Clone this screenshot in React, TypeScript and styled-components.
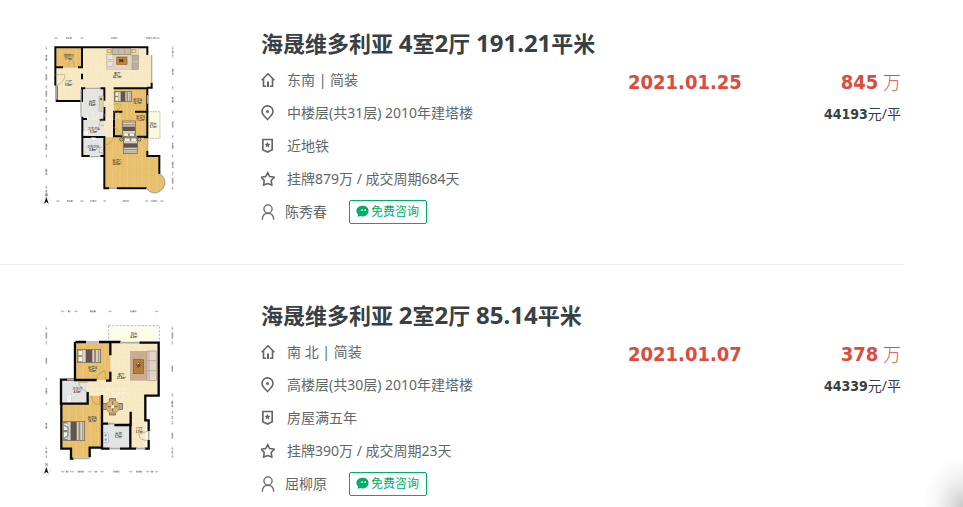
import React from "react";
import styled, { createGlobalStyle, css } from "styled-components";

const GlobalStyle = createGlobalStyle`
  *, *::before, *::after { box-sizing: border-box; }
  body {
    margin: 0;
    background: #fff;
    color: #616669;
    font-family: "Noto Sans", "Noto Sans CJK SC", sans-serif;
    font-size: 14px;
  }
`;

const Page = styled.main`
  position: relative;
  min-height: 100vh;
  padding-right: 59px;
  overflow: hidden;
`;

const CornerGlow = styled.div`
  position: absolute;
  right: 0;
  bottom: 0;
  width: 40px;
  height: 52px;
  background: radial-gradient(ellipse farthest-side at 100% 100%, #c8c8c8 0%, #e2e2e2 32%, #f5f5f5 64%, rgba(255, 255, 255, 0) 100%);
  pointer-events: none;
`;

const List = styled.ul`
  margin: 0;
  padding: 0;
  list-style: none;
`;

const Listing = styled.li`
  display: grid;
  grid-template-columns: 160px minmax(0, 1fr) 113px 160px;
  align-items: start;
  padding: 32px 3px 36px 30px;
  border-bottom: 1px solid #eee;

  &:first-child { padding-top: 25px; }
  &:last-child { padding-bottom: 0; border-bottom: 0; }
`;

const PlanLink = styled.a`
  display: block;
  height: 190px;
  svg { display: block; }
`;

const Info = styled.div`
  margin-left: 71px;
`;

const Title = styled.h2`
  margin: 0;
  height: 38px;
  font-size: 22px;
  line-height: 36px;
  font-weight: 700;
  white-space: nowrap;
`;

const TitleLink = styled.a`
  color: #394043;
  text-decoration: none;
`;

const Figure = styled.span`
  font-size: 24px;
`;

const Line = styled.div<{ $tight?: boolean }>`
  display: flex;
  align-items: center;
  gap: ${(p) => (p.$tight ? 10 : 12)}px;
  height: 33px;
  line-height: 20px;
  white-space: nowrap;
`;

const Consult = styled.button`
  display: flex;
  align-items: center;
  gap: 2px;
  height: 24px;
  margin-left: 12px;
  padding: 0 7px 0 6px;
  border: 1px solid #00ae66;
  border-radius: 2px;
  background: #fff;
  color: #00ae66;
  font-family: inherit;
  font-size: 12px;
  line-height: 20px;
  cursor: pointer;
`;

const strongFigures = css`
  font-family: "DejaVu Sans Condensed", "DejaVu Sans", sans-serif;
  font-weight: 700;
`;

const DealDate = styled.time`
  ${strongFigures}
  margin-top: 41px;
  color: #db4c3f;
  font-size: 20px;
  line-height: 32px;
  white-space: nowrap;
`;

const PriceColumn = styled.div`
  margin-top: 41px;
  text-align: right;
  white-space: nowrap;
`;

const Total = styled.div`
  color: #db4c3f;
  font-size: 18px;
  font-weight: 300;
  line-height: 32px;
  strong { ${strongFigures} font-size: 20px; }
`;

const UnitPrice = styled.div`
  color: #394043;
  font-size: 14px;
  line-height: 32px;
  strong { ${strongFigures} }
`;

const Icon = styled.svg`
  flex: none;
  width: 14px;
  height: 16px;
  fill: none;
  stroke: #616669;
  stroke-width: 1.6;
`;

const HouseIcon = () => (
  <Icon viewBox="0 0 14 16" aria-hidden="true">
    <path d="M.7 8.3 7 1.8l6.3 6.5M2.5 7v7.3h2.7M11.5 7v7.3H8.8" />
    <path d="M7 9.5V15" strokeWidth="2" />
  </Icon>
);
const PinIcon = () => (
  <Icon viewBox="0 0 14 16" aria-hidden="true">
    <path d="M6.500 14.500C4 11.800 1 9.500 1 6.400a5.500 5.500 0 0 1 11 0c0 3.100-3 5.400-5.500 8.100Z" />
    <circle cx="6.500" cy="6.400" r="1.500" fill="#616669" stroke="none" />
  </Icon>
);
const BadgeIcon = () => (
  <Icon viewBox="0 0 14 16" aria-hidden="true">
    <path d="M1.800 1.500h9.400v10.300L6.500 14 1.800 11.800Z" strokeWidth="1.700" />
    <path d="m6.500 3.800.9 1.900 2.100.2-1.600 1.400.5 2.100-1.900-1.100-1.900 1.100.5-2.100-1.600-1.400 2.100-.2Z" fill="#616669" stroke="none" />
  </Icon>
);
const StarIcon = () => (
  <Icon viewBox="0 0 14 16" aria-hidden="true">
    <path d="m6.700 1.700 2 3.900 4.500.7-3 3.200.6 4.500-4.100-1.500L2.600 14l.6-4.500-3-3.200 4.500-.7Z" />
  </Icon>
);
const PersonIcon = () => (
  <Icon viewBox="0 0 14 16" aria-hidden="true">
    <circle cx="7" cy="5" r="4.100" strokeWidth="1.300" />
    <path d="M1.300 15.700c0-4 2-6.400 5.700-6.400s5.700 2.400 5.700 6.400" strokeWidth="1.300" />
  </Icon>
);

const BubbleSvg = styled.svg`
  flex: none;
  width: 13px;
  height: 13px;
`;
const ChatIcon = () => (
  <BubbleSvg viewBox="0 0 13 13" aria-hidden="true">
    <path d="M6.700.8C3 .8.400 2.900.400 5.700c0 1.600.7 2.900 1.800 3.800L1.500 12l2.400-.9c4 1.200 8.700-.9 8.700-5.400 0-2.800-2.400-4.900-5.900-4.900Z" fill="#00ae66" />
    <circle cx="6" cy="5.200" r=".9" fill="#fff" />
    <circle cx="9.200" cy="5.200" r=".9" fill="#fff" />
  </BubbleSvg>
);

const PlanSvg = styled.svg`
  font-family: "Noto Sans", "Noto Sans CJK SC", sans-serif;
  font-size: 9px;
  text-anchor: middle;
  fill: #383838;
`;

type RulerProps = { x: number; y: number; marks: number[]; vertical?: boolean };
const Ruler = ({ x, y, marks, vertical }: RulerProps) => (
  <g transform={`translate(${x} ${y})${vertical ? " rotate(90)" : ""}`}>
    {marks.map((m) => (
      <path key={m} d={`M${m - 6} 0h12M${m} -3v6`} stroke="#888" strokeWidth="1.400" fill="none" />
    ))}
    {marks.slice(1).map((m, i) => {
      const middle = (m + marks[i]) / 2;
      const half = m - marks[i] > 40 ? 9 : 4;
      return <path key={m} d={`M${middle - half} 0h${half * 2}`} stroke="#888" strokeWidth="5" strokeDasharray="3 1" />;
    })}
  </g>
);

const Label = ({ x, y, name, area }: { x: number; y: number; name: string; area: string }) => (
  <g>
    <text x={x} y={y} fontSize="10">{name}</text>
    <text x={x} y={y + 9} fontSize="8" fontWeight="700">{area}</text>
  </g>
);

const Bed = ({ x, y, w, h, turn = 0 }: { x: number; y: number; w: number; h: number; turn?: number }) => (
  <g transform={`translate(${x} ${y}) rotate(${turn})`}>
    <rect width={w} height={h} fill="#d9d1c2" stroke="#685747" strokeWidth="2" />
    <rect width={w * 0.22} height={h} fill="#8b8173" />
    <rect x={w * 0.05} y={h * 0.1} width={w * 0.16} height={h * 0.34} fill="#f6f3e9" />
    <rect x={w * 0.05} y={h * 0.56} width={w * 0.16} height={h * 0.34} fill="#f6f3e9" />
    <rect x={w * 0.36} y="1" width={w * 0.28} height={h - 2} fill="#62554e" />
    <rect x={w * 0.72} y="1" width={w * 0.08} height={h - 2} fill="#978a7d" />
    <rect x={w * 0.88} y="1" width={w * 0.06} height={h - 2} fill="#a79b8c" />
  </g>
);

const Compass = ({ y }: { y: number }) => (
  <g>
    <circle cx="49" cy={y} r="13" fill="none" stroke="#ccc" strokeWidth="1" />
    <path d={`M49 ${y - 12}l7 20-7-5-7 5Z`} fill="#111" />
    <text x="49" y={y - 16} fontSize="11">N</text>
  </g>
);

const Patterns = ({ id }: { id: string }) => (
  <defs>
    <pattern id={`${id}-wood`} width="22" height="42" patternUnits="userSpaceOnUse">
      <rect width="22" height="42" fill="#e9c16e" />
      <path d="M0 0v42M11 0v42M0 13h11M11 31h11" stroke="#dcb05c" strokeWidth="1" />
      <path d="M6 0v42" stroke="#efcd83" strokeWidth="2" />
    </pattern>
    <pattern id={`${id}-stone`} width="16" height="16" patternUnits="userSpaceOnUse">
      <rect width="16" height="16" fill="#f7e9c4" />
      <path d="M0 0h16M0 0v16" stroke="#eedfb8" strokeWidth="1" />
      <path d="m3 12 4-4m2-3 3-2" stroke="#fbf3d9" strokeWidth="2" />
    </pattern>
  </defs>
);

const LargePlan = () => (
  <PlanSvg width="160" height="190" viewBox="0 0 480 570" role="img" aria-label="4室2厅户型图">
    <Patterns id="large" />
    <Ruler x={0} y={39} marks={[78, 156, 350, 364, 384]} />
    <Ruler x={0} y={528} marks={[84, 156, 224, 350, 396]} />
    <Ruler x={49} y={0} vertical marks={[70, 128, 185, 228, 282, 337, 393, 487, 512]} />
    <Ruler x={428} y={0} vertical marks={[70, 92, 188, 262, 335, 393, 445, 490]} />
    <path d="M76 67h276v23h12v98h-12v205h36v55c14 9 22 26 12 42-12 20-41 19-51 0H223v-98h-67V190l-4-2v40H80v-46h-4Z" fill="url(#large-stone)" />
    <path d="M77 68h78v60H77ZM251 190h101v145H251ZM223 337h128v57h37v53c17 10 19 28 10 42-13 18-38 18-49 0H223Z" fill="url(#large-wood)" />
    <path d="M156 191h66v89h-66ZM157 282h65v111h-65Z" fill="#e5e5e4" />
    <path d="M352 260h38v80h-38Z" fill="#f8fadd" stroke="#b9b9ad" strokeWidth="3" strokeDasharray="5 3" />
    <g fill="none" stroke="#090909" strokeWidth="6">
      <path d="M76 182V67h276v23M352 188h13v-15M76 127h23m45 0h12V67M156 146v17M80 182v46h76v-38h10M211 190h12v37M223 246v38h-14M157 282h14M157 275v118h22m32 0h12v-57h-66M223 361v129h15M260 490h90M251 190h101v145H320M251 260h26m38 0h37M252 258v76h34M342 337h10v-12M352 377v16h36v54" />
    </g>
    <g fill="none" stroke="#aaaca8" strokeWidth="4">
      <path d="M365 90v84M80 182v42M153 193v82M181 395h28M239 490h21M353 340v37M166 190h45M353 211v25M388 447c17 9 21 28 11 42-12 19-39 19-49 0" />
    </g>
    <g fill="none" stroke="#a98c60" strokeWidth="1.500">
      <path d="M76 149h29q0 23-29 33M115 123q0-18 12-20l8 25M251 237h21q0 18-21 23M251 307q19 8 23 27M224 360q23-3 25-23M222 288q-18 0-14 13h14M222 365q-19 0-14 18h14" />
    </g>
    <rect x="230" y="70" width="96" height="64" fill="#e3d4bd" stroke="#b7aa91" />
    <rect x="246" y="70" width="57" height="18" fill="#c9baa8" stroke="#877968" strokeWidth="2" />
    <path d="M265 71v16M284 71v16" stroke="#877968" />
    <rect x="306" y="91" width="19" height="42" fill="#bcae9f" stroke="#877968" />
    <path d="M306 110h19" stroke="#eee" />
    <rect x="231" y="89" width="18" height="15" fill="#e6e4df" stroke="#989387" />
    <rect x="231" y="109" width="18" height="15" fill="#e6e4df" stroke="#989387" />
    <rect x="260" y="96" width="31" height="22" fill="#bc8539" stroke="#86602e" strokeWidth="2" />
    <path d="m267 103 14 7m-13 1 11-8" stroke="#3d3730" strokeWidth="4" />
    <rect x="232" y="72" width="12" height="12" fill="#cba94d" />
    <rect x="305" y="72" width="12" height="12" fill="#cba94d" />
    <circle cx="238" cy="78" r="4" fill="#f1df91" /><circle cx="311" cy="78" r="4" fill="#f1df91" />
    <rect x="207" y="213" width="13" height="46" fill="#d9d5a3" stroke="#9e9b77" />
    <circle cx="213" cy="222" r="4" fill="#55734d" /><circle cx="213" cy="243" r="4" fill="#eee" stroke="#888" />
    <Bed x={254} y={199} w={50} h={31} />
    <Bed x={277} y={335} w={47} h={39} turn={-90} />
    <Bed x={323} y={338} w={47} h={43} turn={90} />
    <circle cx="274" cy="343" r="5" fill="#d7b76c" stroke="#29342e" strokeWidth="2" />
    <circle cx="328" cy="343" r="5" fill="#d7b76c" stroke="#29342e" strokeWidth="2" />
    <rect x="184" y="338" width="13" height="8" fill="#fff" stroke="#c1c1bd" />
    <rect x="161" y="318" width="14" height="12" fill="#f8f8f6" stroke="#c1c1bd" />
    <text x="221" y="286" fontSize="30" fill="#fff" opacity=".3">LIANJIA</text>
    <Label x={116} y={97} name="储物间" area="7.1m²" />
    <Label x={116} y={174} name="门厅" area="5.6m²" />
    <Label x={262} y={151} name="客厅" area="42.1m²" />
    <Label x={187} y={235} name="厨房" area="9.6m²" />
    <Label x={323} y={228} name="卧室A" area="12.1m²" />
    <Label x={332} y={279} name="卧室B" area="11.2m²" />
    <Label x={191} y={315} name="卫生间A" area="5.3m²" />
    <Label x={189} y={368} name="卫生间B" area="5.8m²" />
    <Label x={370} y={299} name="阳台" area="5.1m²" />
    <Label x={261} y={412} name="卧室C" area="32.6m²" />
    <Compass y={528} />
  </PlanSvg>
);

const SmallPlan = () => (
  <PlanSvg width="160" height="190" viewBox="0 6 480 570" role="img" aria-label="2室2厅户型图">
    <Patterns id="small" />
    <Ruler x={0} y={49} marks={[98, 138, 240, 380]} />
    <Ruler x={0} y={530} marks={[98, 126, 179, 216, 302, 353, 380]} />
    <Ruler x={49} y={0} vertical marks={[100, 143, 252, 326, 460, 484]} />
    <Ruler x={427} y={0} vertical marks={[100, 143, 300, 352, 384, 461, 484]} />
    <path d="M136 142h250v160h-39v160h-84v-77h-47V302h-46v-47h-34Z" fill="url(#small-stone)" />
    <path d="M139 144h102v111H139ZM97 326h80v-24h38v156h-36v29h-58v-29H97Z" fill="url(#small-wood)" />
    <path d="M96 256h76v69H96ZM218 386h83v73h-83Z" fill="#e2e3e4" />
    <path d="M240 98h143v43H240Z" fill="#fbfde5" />
    <path d="M236 92h152v49M236 92v49" fill="none" stroke="#929292" strokeWidth="2" strokeDasharray="7 4" />
    <g fill="none" stroke="#070707" strokeWidth="7">
      <path d="M136 141h32m39 0h65M328 143h58v159h-40v74h10v32M135 141v114h65M241 141v40M241 230v27h-13M134 254h-41v72h80v-35M111 254H93M94 326v135h29v30h8M179 487v-29h37V300M216 362v99h23M270 461h31v-76M302 350v40h-49M235 386h-19M301 461h17M344 461h12v-26M318 461v-3" />
    </g>
    <g fill="none" stroke="#a9adae" strokeWidth="5">
      <path d="M168 141h39M270 143h58M111 254h21M130 490h49M239 461h31M318 461h28M356 408v27M237 386h16" />
    </g>
    <g fill="none" stroke="#a77b41" strokeWidth="1.500">
      <path d="M201 252q4-24 25-24v25M172 291q-22-10-26-29h27M184 302q2 25 25 27v-27M356 408l-30 9q4 23 30 18" />
    </g>
    <Bed x={142} y={163} w={70} h={40} />
    <Bed x={98} y={380} w={66} h={57} />
    <path d="m99 388 15 10v24l-13 9" fill="none" stroke="#6aa7b0" strokeWidth="4" />
    <rect x="300" y="168" width="57" height="89" fill="#c9ad90" />
    <rect x="351" y="168" width="29" height="89" rx="4" fill="#e2d6ca" stroke="#a08e7d" strokeWidth="2" />
    <path d="M353 197h25M353 227h25M357 170v84" stroke="#a99a8b" strokeWidth="2" />
    <rect x="310" y="194" width="30" height="42" fill="#b77c38" stroke="#805928" strokeWidth="2" />
    <path d="m318 208 10-7 5 11-9 8Z" fill="#655646" /><path d="m322 207 5-2" stroke="#eee" strokeWidth="3" />
    <g fill="#a4aaa1" stroke="#50554e" strokeWidth="2">
      <rect x="239" y="311" width="17" height="12" /><rect x="239" y="347" width="17" height="13" />
      <rect x="219" y="325" width="12" height="18" /><rect x="264" y="325" width="13" height="18" />
    </g>
    <circle cx="248" cy="335" r="20" fill="#ddb168" stroke="#b1803d" strokeWidth="2" />
    <path d="M248 320v30M233 335h30" stroke="#6c675f" strokeWidth="3" />
    <circle cx="248" cy="335" r="5" fill="#fff1ce" />
    <rect x="220" y="414" width="15" height="28" fill="#eee" stroke="#777" />
    <circle cx="227" cy="421" r="4" fill="#82afc2" /><circle cx="227" cy="434" r="4" fill="#82afc2" />
    <rect x="111" y="300" width="13" height="21" fill="#fff" stroke="#bbb" />
    <ellipse cx="117" cy="308" rx="4" ry="6" fill="#eee" />
    <text x="238" y="301" fontSize="32" fill="#fff" opacity=".3">LIANJIA</text>
    <Label x={312} y={119} name="阳台" area="4.3m²" />
    <Label x={188} y={222} name="卧室B" area="9.2m²" />
    <Label x={274} y={244} name="客厅" area="27.6m²" />
    <Label x={142} y={286} name="卫生间" area="4.3m²" />
    <Label x={187} y={371} name="卧室A" area="14.1m²" />
    <Label x={266} y={420} name="厨房" area="5.7m²" />
    <Label x={328} y={405} name="门厅" area="3.7m²" />
    <Compass y={528} />
  </PlanSvg>
);

type Home = {
  community: string;
  rooms: [string, string];
  area: string;
  facing: string;
  floor: string;
  feature: string;
  deal: string;
  agent: string;
  date: string;
  total: string;
  unit: string;
  Plan: React.ComponentType;
};

const homes: Home[] = [
  {
    community: "海晟维多利亚", rooms: ["4", "2"], area: "191.21", facing: "东南 | 简装",
    floor: "中楼层(共31层) 2010年建塔楼", feature: "近地铁", deal: "挂牌879万 / 成交周期684天",
    agent: "陈秀春", date: "2021.01.25", total: "845", unit: "44193", Plan: LargePlan,
  },
  {
    community: "海晟维多利亚", rooms: ["2", "2"], area: "85.14", facing: "南 北 | 简装",
    floor: "高楼层(共30层) 2010年建塔楼", feature: "房屋满五年", deal: "挂牌390万 / 成交周期23天",
    agent: "屈柳原", date: "2021.01.07", total: "378", unit: "44339", Plan: SmallPlan,
  },
];

const HomeRow = ({ home }: { home: Home }) => (
  <Listing>
    <PlanLink href="#"><home.Plan /></PlanLink>
    <Info>
      <Title>
        <TitleLink href="#">
          {home.community} <Figure>{home.rooms[0]}</Figure>室<Figure>{home.rooms[1]}</Figure>厅 <Figure>{home.area}</Figure>平米
        </TitleLink>
      </Title>
      <Line><HouseIcon /><span>{home.facing}</span></Line>
      <Line><PinIcon /><span>{home.floor}</span></Line>
      <Line><BadgeIcon /><span>{home.feature}</span></Line>
      <Line><StarIcon /><span>{home.deal}</span></Line>
      <Line $tight>
        <PersonIcon />
        <span>{home.agent}</span>
        <Consult type="button"><ChatIcon />免费咨询</Consult>
      </Line>
    </Info>
    <DealDate dateTime={home.date.replace(/\./g, "-")}>{home.date}</DealDate>
    <PriceColumn>
      <Total><strong>{home.total}</strong> 万</Total>
      <UnitPrice><strong>{home.unit}</strong>元/平</UnitPrice>
    </PriceColumn>
  </Listing>
);

export default function App() {
  return (
    <>
      <GlobalStyle />
      <Page>
        <List>
          {homes.map((home) => <HomeRow key={home.unit} home={home} />)}
        </List>
        <CornerGlow />
      </Page>
    </>
  );
}
